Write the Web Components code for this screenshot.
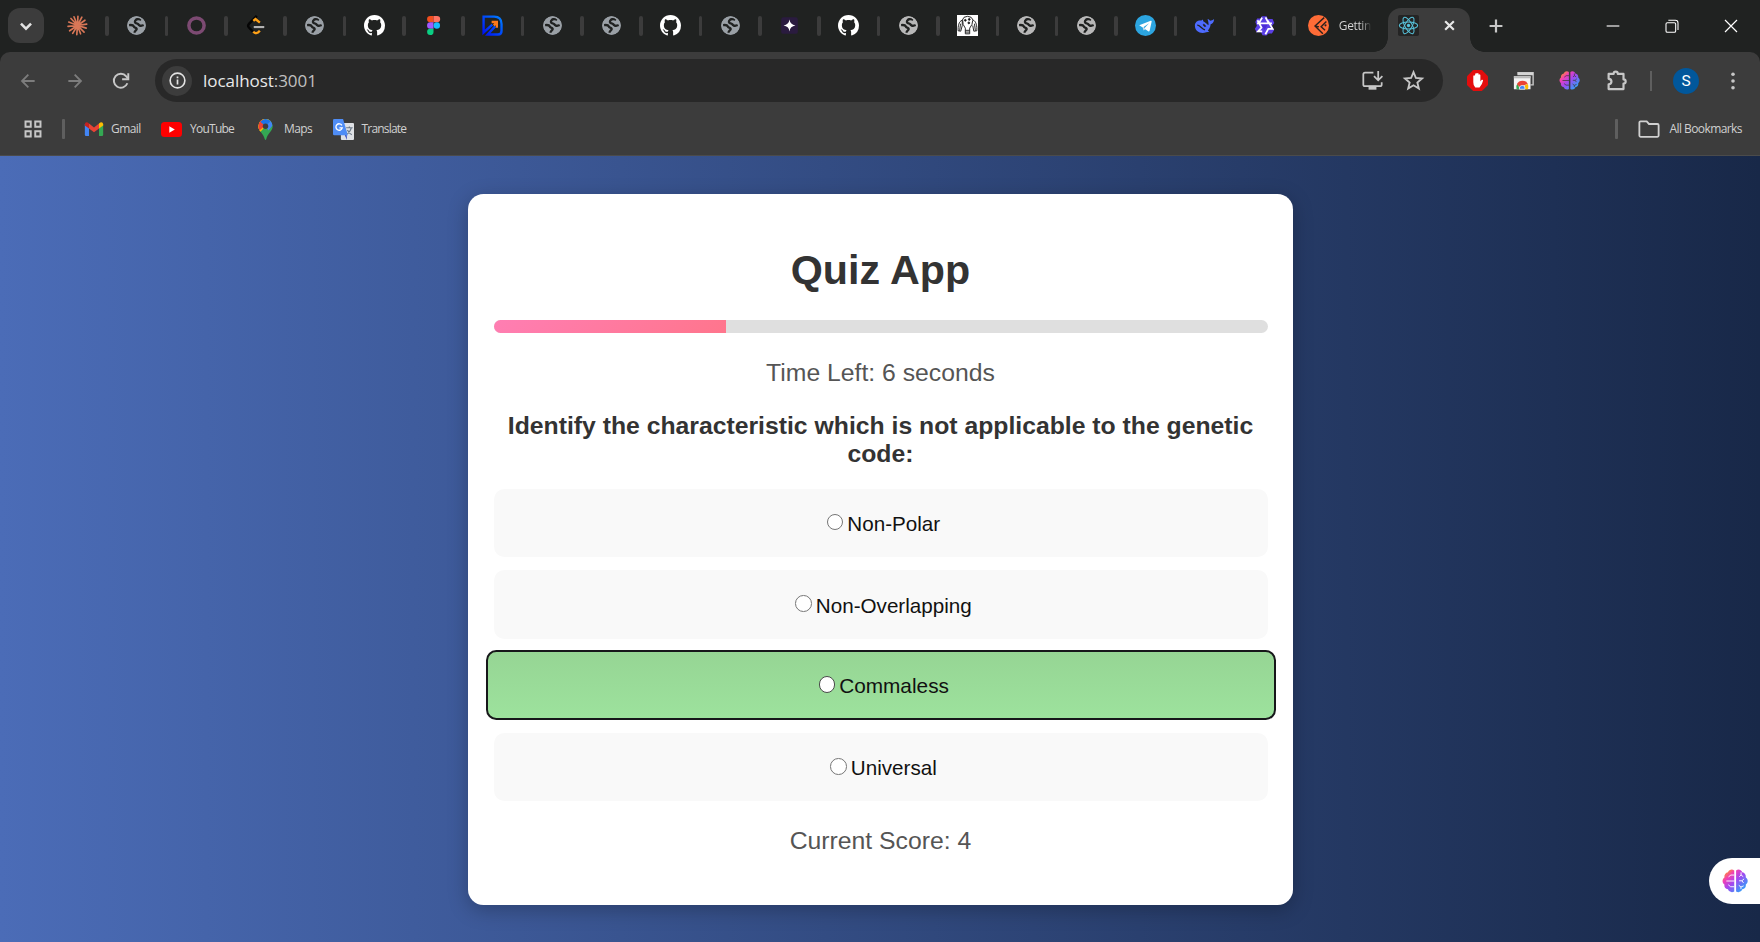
<!DOCTYPE html>
<html lang="en">
<head>
<meta charset="utf-8">
<title>Quiz App</title>
<style>
html,body{margin:0;height:100%;overflow:hidden;font-family:"Liberation Sans",Arial,sans-serif}
</style>
</head>
<body>
<browser-window></browser-window>
<script>
const globe = c => `<circle cx="12" cy="12" r="10.500" fill="${c}"/><path d="M17.500 5.200C14.600 4.200 11.500 4.800 10.500 6.600c-.9 1.900.4 3 2.400 3.200 1.300.2 1.300 1.400 2.400 2 1.600.8 3.700.3 4.900-.3M3.500 11.600c2.600-.4 4.900.2 5.500 1.600.5 1.400 3 1.200 3.200 2.800.2 1.500-2.600 1.700-2.500 4.400" fill="none" stroke="#202221" stroke-width="2.700"/><circle cx="12" cy="12" r="9.700" fill="none" stroke="${c}" stroke-width="1.800"/>`;
const brain = line => `<defs><linearGradient id="b" x1="0" y1="0" x2="1" y2="1"><stop offset=".08" stop-color="#ff9a1f"/><stop offset=".28" stop-color="#f23fb4"/><stop offset=".5" stop-color="#a447f0"/><stop offset=".78" stop-color="#4a8cf8"/><stop offset="1" stop-color="#22c0f5"/></linearGradient></defs>
<path fill="url(#b)" d="M11.300 2.200v19.500C9 23 6.300 22 5.500 19.700 3.200 19.500 1.800 17.400 2.200 15.200 0 13.500 0 10.300 2.200 8.700 1.900 6.200 3.400 4.300 5.500 4 6.500 1.400 9.300.8 11.300 2.200zM13 2.200v19.500c2.400 1.300 4.900.3 5.700-2 2.300-.2 3.700-2.300 3.300-4.500 2.300-1.700 2.300-4.900 0-6.500.3-2.500-1.100-4.400-3.300-4.700-1-2.600-3.700-3.200-5.700-1.800z"/>
<g fill="none" stroke="${line}" stroke-width=".85"><path d="M11.400 6.500H8.200L6 8.200M11.400 12H4M11.400 17.300H8L5.800 15.500M16 8l1.600-1.500V4M17.600 6.500l2 1.500M15.800 11.800h2.600l2-1.800M18.400 11.800l1.500 2M15.500 16l2 1.500 2.500-1M17.500 17.500v2"/></g>`;
const ICONS = {
 chevron:`<path d="M6.500 9.500l5.500 5.500 5.500-5.500" fill="none" stroke="#e3e3e3" stroke-width="2.800"/>`,
 claude:`<g stroke="#d97757" stroke-width="1.900" stroke-linecap="round"><path d="M12 12L12.500 1.500M12 12L17 2.500M12 12l8.500-6M12 12l10.500-1.500M12 12l10 3M12 12l7.500 7.500M12 12l3.500 9.500M12 12l-.8 10.500M12 12l-5.500 9M12 12l-9 6M12 12L1.200 13M12 12L2 8M12 12L4.500 4M12 12L8 2"/></g>`,
 globe:globe('#9aa0a6'), globe2:globe('#b8b8b8'),
 ring:`<circle cx="12" cy="12" r="8.700" fill="none" stroke="#7c4a72" stroke-width="4"/>`,
 leet:`<path d="M13.500 1L4.500 10.200Q2.700 12.300 4.500 14.300L9 19" fill="none" stroke="#050505" stroke-width="2.800"/><path d="M9.500 6.800L12 4.700l5 4M9.500 19q3 4 7.500-1" fill="none" stroke="#ffa116" stroke-width="2.700"/><path d="M10 13.800h12" stroke="#b3b3b3" stroke-width="2.400"/>`,
 github:`<path transform="scale(1.5)" fill="#fff" d="M8 0C3.580 0 0 3.580 0 8c0 3.540 2.290 6.530 5.470 7.590.4.070.55-.17.55-.38 0-.19-.01-.82-.01-1.490-2.010.37-2.530-.49-2.690-.94-.09-.23-.48-.94-.82-1.130-.28-.15-.68-.52-.01-.53.63-.01 1.080.58 1.230.82.72 1.210 1.870.87 2.330.66.070-.52.28-.87.51-1.070-1.780-.2-3.640-.89-3.640-3.950 0-.87.31-1.590.82-2.150-.08-.2-.36-1.020.08-2.120 0 0 .67-.21 2.200.82.64-.18 1.320-.27 2-.27s1.360.09 2 .27c1.530-1.040 2.200-.82 2.200-.82.44 1.100.16 1.920.08 2.120.51.56.82 1.270.82 2.150 0 3.070-1.870 3.750-3.650 3.950.29.25.54.73.54 1.480 0 1.070-.01 1.930-.01 2.200 0 .21.15.46.55.38A8.010 8.010 0 0 0 16 8c0-4.420-3.580-8-8-8z"/>`,
 figma:`<path d="M12 1H8.300a3.600 3.600 0 0 0 0 7.300H12z" fill="#f24e1e"/><path d="M12 1h4a3.600 3.600 0 0 1 0 7.300h-4z" fill="#ff7262"/><path d="M12 8.300H8.300a3.600 3.600 0 0 0 0 7.300H12z" fill="#a259ff"/><circle cx="15.800" cy="12" r="3.650" fill="#1abcfe"/><path d="M12 15.600H8.300a3.650 3.650 0 1 0 3.700 3.700z" fill="#0acf83"/>`,
 dblue:`<defs><linearGradient id="d" x1="1" y1="0" x2="0" y2="1"><stop stop-color="#0080ff"/><stop offset="1" stop-color="#0010f5"/></linearGradient></defs><path d="M1.800 16V1.800h12q8.500 0 8.500 8.500v8q0 4-4 4H6.500L15 13M1.800 16v4l10-9" fill="none" stroke="url(#d)" stroke-width="2.700"/><path d="M11 8h6v6.500M16.500 8.500L13.500 12" fill="none" stroke="#ff7a1a" stroke-width="2.600"/>`,
 spark:`<rect x="2.500" y="2.500" width="19" height="19" rx="2.500" fill="#2a1b3f"/><path d="M12 5.200Q12.800 11.200 18.800 12 12.800 12.800 12 18.800 11.200 12.800 5.200 12 11.200 11.200 12 5.200z" fill="#fff"/>`,
 sketch:`<path fill="#fff" d="M0 0h24v24H0z"/><g fill="none" stroke="#222" stroke-width="1.100"><path d="M6 6Q7 1.500 12 1.500T18.500 6M6 6c-4 1-5 7-4.700 12l3 .5L6 12zM18.500 6c3.500 1 4.500 7 4.200 12l-3.500.5L18 12M6.500 6q-.5 5 3 9v6.500h5V15q3.500-4 3.500-9M9.500 17.500h5M9.500 19.500h5M3 18l1-8M21 18l-1-8"/><circle cx="9.500" cy="6" r="1" fill="#111"/><circle cx="14" cy="5" r="1" fill="#111"/><circle cx="13.500" cy="9" r="1" fill="#111"/></g>`,
 telegram:`<circle cx="12" cy="12" r="12" fill="#2ca5e0"/><path d="M4.800 11.800L18 6.600q1.300-.3 1 1.200l-2.200 10q-.4 1.500-1.700.7L8.800 14.200z" fill="#fff"/><path d="M8.800 14.200l1 3.500L12.200 16" fill="#c8daea"/><path d="M9.500 14L16 9.300l-5 5.500" fill="#2ca5e0"/>`,
 deepseek:`<path fill="#4d6bfe" d="M1 12.200C1 8 4 5.800 8.500 6.200l1.500-1 .8 2.200c2 .8 4.200 3 5.500 4.200.8-1 .1-1.900.1-3.600L15.500 4.500c1.500.3 2.300 1 2.900 2 1.700-.1 3-.6 4.600-1.800-.2 4-2 5.500-4 6-.3 3.100-1.400 5.200-3.200 7l1.700 1.400-3.500.5C7.700 22.300 1 18.500 1 12.200z"/><path d="M3.700 11.500c3-.2 4.700 4 8.800 5.600" fill="none" stroke="#202221" stroke-width="1.500"/><path d="M10.500 10.500c1.200-.4 2.700 1.300 3 2.500-1.500.7-3-.5-3-2.500z" fill="#202221" stroke="#202221" stroke-width=".6"/>`,
 qwen:`<path d="M9 1.500h5.500l1.300 3.200h5.400l2 4.500-2.700 3.300 2.500 4.500-2.500 4-3.800.2-2.600 2.300-4.400-.5-1.600-3.400H3l-2-4 2.300-3.300L1.500 8 3.600 4l3.700-.1z" fill="#5b3fe6"/><path d="M9.300 3L5.500 9.600h15M4 6l4.600 8.500-4 4.300h4.800M15.800 6.500l5.500 9.300-5.700.1M3.500 9.500h5M13 22l3.500-6.500M13.200 2.800l3 5.700" fill="none" stroke="#fff" stroke-width="2"/><path d="M8.500 11h7L12 17z" fill="#4b2bd6"/>`,
 postman:`<circle cx="12" cy="12" r="12" fill="#ff6c37"/><path d="M18.500 3L8 12.500l9 9M21 7.500l-6 6 4.500 4M8 12.500l4.500 1" fill="none" stroke="#2a211e" stroke-width="1.600"/><circle cx="20" cy="11.800" r="1.200" fill="#2a211e"/>`,
 react:`<rect width="24" height="24" rx="2" fill="#242424"/><g fill="none" stroke="#58c4dc" stroke-width="1.150"><ellipse cx="12" cy="12" rx="10.500" ry="4.100"/><ellipse cx="12" cy="12" rx="10.500" ry="4.100" transform="rotate(60 12 12)"/><ellipse cx="12" cy="12" rx="10.500" ry="4.100" transform="rotate(120 12 12)"/></g><circle cx="12" cy="12" r="1.900" fill="#58c4dc"/>`,
 close:`<path d="M4 4l16 16M20 4L4 20" stroke="#e8e8e8" stroke-width="4"/>`,
 plus:`<path d="M12 1v22M1 12h22" stroke="#c7c7c7" stroke-width="3.800"/>`,
 min:`<path d="M2.500 12h19" stroke="#fff" stroke-width="1.700"/>`,
 restore:`<path d="M3 9q0-2 2-2h10.500q2 0 2 2v10.500q0 2-2 2H5q-2 0-2-2zM6.500 3.500H17q4 0 4 4V18" fill="none" stroke="#fff" stroke-width="1.600"/>`,
 wclose:`<path d="M3 3l18 18M21 3L3 21" stroke="#fff" stroke-width="1.800"/>`,
 back:`<path d="M22 12H3M12.500 2.500L3 12l9.500 9.500" fill="none" stroke="#7d7d7d" stroke-width="2.700"/>`,
 fwd:`<path d="M2 12h19M11.500 2.500L21 12l-9.500 9.500" fill="none" stroke="#7d7d7d" stroke-width="2.700"/>`,
 reload:`<path d="M20.500 15A9.300 9.300 0 1 1 19 5.800l2 2.400" fill="none" stroke="#c7c7c7" stroke-width="2.600"/><path d="M21.700 1.500v8.200h-8.200" fill="none" stroke="#c7c7c7" stroke-width="2.600"/>`,
 info:`<circle cx="12" cy="12" r="10.400" fill="none" stroke="#e3e3e3" stroke-width="2.300"/><path d="M12 10.500v7M12 6.200v2.500" stroke="#e3e3e3" stroke-width="2.400"/>`,
 install:`<path d="M13 3H3.500Q1.500 3 1.500 5v11.500q0 2 2 2h17q2 0 2-2V14M18.500 1v10.500M13.700 7l4.800 4.800L23.300 7" fill="none" stroke="#c7c7c7" stroke-width="2"/><path d="M7.500 18h9v4.500h-9z" fill="#c7c7c7"/>`,
 star:`<path d="M12 2.500l2.700 6.600 7.100.6-5.400 4.600 1.700 7L12 17.500l-6.100 3.800 1.700-7-5.400-4.600 7.100-.6z" fill="none" stroke="#c7c7c7" stroke-width="2.100"/>`,
 adblock:`<path d="M7 0h10l7 7v10l-7 7H7l-7-7V7z" fill="#e40d0d"/><path fill="#fff" d="M7.200 6.500q1.200-1.300 1.800.2l.5-2.500q1.200-1.600 1.800.2 1.100-1.900 2 0v1q1.200-1.300 2 .3V13l1.500-1.800q1.800-.4 1.500 1.200-.9 4.600-4 7.600H9.500Q7 17.500 7.200 14z"/>`,
 store:`<path d="M5 3h18v14h-3" fill="none" stroke="#c7c7c7" stroke-width="1.600"/><path d="M5 3h18v3H5z" fill="#d5d5d5"/><path d="M1 7h19v15H1z" fill="#f4f4f4"/><path d="M1 7h19v2.500H1z" fill="#bbb"/><path d="M4 22a7.200 7.200 0 0 1 1-6.500L8 22z" fill="#34a853"/><path d="M4.500 16a7 7 0 0 1 12.500 0l-6 2-4 1z" fill="#ea4335"/><path d="M17 16q1 3 0 6h-5l2-5z" fill="#fbbc04"/><path d="M7.500 22a3.200 3.200 0 1 1 6 0z" fill="#4285f4" stroke="#fff" stroke-width=".8"/>`,
 brain:brain('#3c3c3c'), brainw:brain('#fff'),
 ext:`<path d="M3 4.500h5.700C8.700 1 13.500 1 13.500 4.500H20v6.300c3.300 0 3.300 4.700 0 4.700v6.300H3v-5.500c4.300-.3 4.300-6 0-6.200z" fill="none" stroke="#c7c7c7" stroke-width="2.500" stroke-linejoin="round"/>`,
 dots:`<g fill="#c7c7c7"><circle cx="12" cy="3" r="2.400"/><circle cx="12" cy="12" r="2.400"/><circle cx="12" cy="21" r="2.400"/></g>`,
 apps:`<path d="M2 2h7v7H2zM15 2h7v7h-7zM2 15h7v7H2zM15 15h7v7h-7z" fill="none" stroke="#c7c7c7" stroke-width="2.600"/>`,
 gmail:`<path d="M1 6v13q0 1.500 1.500 1.500H6V10z" fill="#4285f4"/><path d="M23 6v13q0 1.500-1.500 1.500H18V10z" fill="#34a853"/><path d="M6 5.500l6 4.700 6-4.700v6L12 16l-6-4.500z" fill="#ea4335"/><path d="M6 5.500v6L1 7.800V6q.7-3 3.500-1.700z" fill="#c5221f"/><path d="M18 5.500v6l5-3.700V6q-.7-3-3.500-1.700z" fill="#fbbc04"/>`,
 youtube:`<rect x="0" y="3.500" width="24" height="17" rx="4" fill="#f00"/><path d="M9.500 8.300v7.400l6.300-3.700z" fill="#fff"/>`,
 maps:`<defs><clipPath id="m"><path d="M12 0a8.200 8.200 0 0 1 8.200 8.200c0 6-5.800 7.500-7.300 14.600q-.9 2.200-1.800 0C9.600 15.700 3.800 14.200 3.800 8.200A8.200 8.200 0 0 1 12 0z"/></clipPath></defs><g clip-path="url(#m)"><path fill="#34a853" d="M0 0h24v24H0z"/><path d="M2 18L18-1H0z" fill="#fbbc04"/><path d="M4 17l9-10 3-3L24 0H8L2 10z" fill="#fbbc04"/><path d="M0 0h9l3 7-8 7z" fill="#ea4335"/><path d="M6 3l6 5 7-6-6-4z" fill="#1a73e8"/><path d="M12 8l6.500-6 1.800 5-5 6z" fill="#4285f4"/></g><circle cx="12" cy="8.200" r="3.100" fill="#3c3c3c"/>`,
 translate:`<rect x="9" y="4.500" width="15" height="19.500" rx="1.200" fill="#dfe1e5"/><path d="M13.500 18.500l2.500 5.500-.5-6z" fill="#2a3fc0"/><path d="M1.500 0h10l5.500 18.500H1.500Q0 18.500 0 17V1.500Q0 0 1.500 0z" fill="#4f8df6"/><path d="M10.200 7.200a3.700 3.700 0 1 0 .4 3H7.300" fill="none" stroke="#fff" stroke-width="1.500"/><path d="M15 10h7.500M18.700 8.500V10M21 10q-1 4-4.500 7M16.500 12.500q2 4 5 5.500" fill="none" stroke="#6c7a89" stroke-width="1.400"/>`,
 folder:`<path d="M1.500 5q0-1.300 1.300-1.300h6.700l2.500 2.800h9.200q1.300 0 1.300 1.300v11.400q0 1.300-1.300 1.300H2.800q-1.300 0-1.300-1.300z" fill="none" stroke="#d0d0d0" stroke-width="2"/>`
};
const define = (tag, render) => customElements.define(tag, class extends HTMLElement {
  connectedCallback() {
    if (this.shadowRoot) return;
    const t = document.createElement('template');
    t.innerHTML = render(this);
    this.attachShadow({mode:'open'}).append(t.content.cloneNode(true));
  }
});

define('ui-icon', el => { const s = el.getAttribute('size') || 21; return `
<style>:host{display:block;flex:none;width:${s}px;height:${s}px}svg{display:block;width:100%;height:100%;overflow:visible}</style>
<svg viewBox="0 0 24 24">${ICONS[el.getAttribute('name')]}</svg>`; });

define('small-tab', el => `
<style>:host{display:flex;flex:none;align-items:center;width:59.35px;height:51px}
div{flex:1;display:flex;justify-content:center}i{width:3.500px;height:20px;border-radius:2px;background:#3c3c3c;margin-top:1px}</style>
<div><ui-icon name="${el.getAttribute('icon')}" size="21"></ui-icon></div><i></i>`);

define('tab-strip', () => `
<style>
:host{display:flex;height:52px;background:#202221;padding-left:8px;align-items:flex-start}
.menu{width:36px;height:35px;margin:8px 5.500px 0 0;border-radius:12px;background:#3c3c3c;display:flex;align-items:center;justify-content:center}
.post{width:92.150px;height:51px;box-sizing:border-box;padding-left:12.150px;display:flex;align-items:center;gap:10px}
.post span{font:12px "Open Sans",sans-serif;color:#d0d0d0;white-space:nowrap;letter-spacing:-.4px;background:linear-gradient(90deg,#d8d8d8 65%,#2c2e2d);-webkit-background-clip:text;-webkit-text-fill-color:transparent}
.active{position:relative;width:82px;height:44px;margin-top:8px;box-sizing:border-box;background:#3c3c3c;border-radius:13px 13px 0 0;display:flex;padding:0 14px 9px 10px;align-items:center;justify-content:space-between}
.active:before,.active:after{content:"";position:absolute;bottom:0;width:14px;height:14px}
.active:before{left:-14px;background:radial-gradient(circle at 0 0,transparent 13.500px,#3c3c3c 14px)}
.active:after{right:-14px;background:radial-gradient(circle at 100% 0,transparent 13.500px,#3c3c3c 14px)}
.plus{margin:18.500px 0 0 19.500px}
.ctl{margin-left:auto;display:flex;gap:43px;padding:18px 21px 0 0}
</style>
<div class="menu"><ui-icon name="chevron" size="22"></ui-icon></div>
${'claude globe ring leet globe github figma dblue globe globe github globe spark github globe2 sketch globe2 globe2 telegram deepseek qwen'.split(' ').map(i=>`<small-tab icon="${i}"></small-tab>`).join('')}
<div class="post"><ui-icon name="postman" size="21"></ui-icon><span>Gettin</span></div>
<div class="active"><ui-icon name="react" size="21"></ui-icon><ui-icon name="close" size="13"></ui-icon></div>
<ui-icon class="plus" name="plus" size="14"></ui-icon>
<div class="ctl"><ui-icon name="min" size="16"></ui-icon><ui-icon name="restore" size="16"></ui-icon><ui-icon name="wclose" size="16"></ui-icon></div>`);

define('nav-bar', () => `
<style>
:host{display:flex;align-items:center;height:57px;box-sizing:border-box;padding:0 18px 0 20px;background:#3c3c3c;border-radius:10px 10px 0 0}
.b{margin-right:31px}
.omni{width:1288px;height:43px;margin-left:6px;border-radius:22px;background:#282828;display:flex;align-items:center;box-sizing:border-box;padding:0 19.500px 0 7px}
.info{width:30px;height:30px;border-radius:50%;background:#3c3c3c;display:flex;align-items:center;justify-content:center}
.url{margin-left:11px;font:17px/24px "Open Sans",sans-serif;letter-spacing:-.05px;color:#e8e8e8}.url span{color:#c0c0c0}
.r{margin-left:auto;display:flex;gap:20px;align-items:center}
.ex{display:flex;align-items:center;margin-left:24px;gap:25.200px}
.sep{width:2px;height:20px;background:#5f5f5f;margin:0 21px 0 23.500px}
.av{width:26px;height:26px;border-radius:50%;background:#01579b;color:#fff;font:15.500px/26px Roboto,sans-serif;text-align:center}
.dots{margin-left:auto}
</style>
<ui-icon class="b" name="back" size="16"></ui-icon><ui-icon class="b" name="fwd" size="16"></ui-icon><ui-icon name="reload" size="18" style="margin-right:19px;margin-left:-2px"></ui-icon>
<div class="omni"><div class="info"><ui-icon name="info" size="17"></ui-icon></div><div class="url">localhost<span>:3001</span></div>
<div class="r"><ui-icon name="install" size="21"></ui-icon><ui-icon name="star" size="21"></ui-icon></div></div>
<div class="ex"><ui-icon name="adblock"></ui-icon><ui-icon name="store"></ui-icon><ui-icon name="brain"></ui-icon><ui-icon name="ext"></ui-icon></div>
<div class="sep"></div><div class="av">S</div><ui-icon class="dots" name="dots" size="18"></ui-icon>`);

define('bookmark-item', () => `
<style>:host{display:flex;align-items:center;font:12px/18px "Open Sans",sans-serif;color:#d0d0d0;white-space:nowrap}</style><slot name="icon"></slot><slot></slot>`);

define('bookmark-bar', () => `
<style>
:host{display:flex;align-items:center;height:47px;box-sizing:border-box;padding:0 18px 6px 24px;background:#3c3c3c;border-bottom:1px solid #4b4b4b}
i{width:3px;height:20px;border-radius:1px;background:#5f5f5f}
</style>
<ui-icon name="apps" size="18"></ui-icon><i style="margin:0 19px 0 20px"></i>
<bookmark-item style="width:77px;letter-spacing:-.55px"><ui-icon slot="icon" name="gmail" size="20" style="margin-right:7px"></ui-icon>Gmail</bookmark-item>
<bookmark-item style="width:97px;letter-spacing:-.75px"><ui-icon slot="icon" name="youtube" style="margin-right:8px"></ui-icon>YouTube</bookmark-item>
<bookmark-item style="width:77px;letter-spacing:-.6px;margin-left:-3px"><ui-icon slot="icon" name="maps" style="margin-right:8px"></ui-icon>Maps</bookmark-item>
<bookmark-item style="letter-spacing:-.8px;margin-left:1px"><ui-icon slot="icon" name="translate" style="margin-right:7.500px"></ui-icon>Translate</bookmark-item>
<i style="margin-left:auto;margin-right:20px"></i>
<bookmark-item style="letter-spacing:-.58px"><ui-icon slot="icon" name="folder" size="22" style="margin-right:10px"></ui-icon>All Bookmarks</bookmark-item>`);

define('progress-bar', () => `
<style>:host{display:block;height:13px;border-radius:6.500px;background:#dfdfdf;overflow:hidden}div{height:100%;width:30%;background:linear-gradient(135deg,#ff7eb3,#ff758c)}</style><div></div>`);

define('quiz-option', () => `
<style>
:host{display:flex;align-items:center;justify-content:center;height:68.300px;box-sizing:border-box;border-radius:10.300px;background:#f9f9f9;font-size:20.640px;line-height:24px;color:#111;margin-bottom:13px;padding-top:2px}
:host([selected]){height:69.500px;margin:-1.200px -8px 13.200px -7.500px;border:2px solid #17171a;background:linear-gradient(#96d594,#9de29d);font-size:20.800px}
:host([low]) span{padding-top:2px}
input{appearance:none;flex:none;box-sizing:border-box;width:16.700px;height:16.700px;margin:-4px 3.900px 0 6px;border:1.200px solid #767676;border-radius:50%;background:#fff}
:host([selected]) input{border-color:#4a4a4a}
</style><input type="radio"><span><slot></slot></span>`);

define('quiz-card', () => `
<style>
:host{display:block;box-sizing:border-box;width:825px;height:711px;padding:26px 25.500px 0;border-radius:15.500px;background:#fff;box-shadow:0 5px 20px rgba(0,0,0,.25);text-align:center;color:#333}
h1{margin:27px 0 26px;font-size:41.250px;line-height:47px}
p{margin:25.500px 0 25px;font-size:24.750px;line-height:28px;color:#555}
h2{margin:0 0 21.500px;font-size:24.750px;line-height:28px}
.score{margin:26px 0 0}
</style>
<h1>Quiz App</h1><progress-bar></progress-bar><p>Time Left: 6 seconds</p>
<h2>Identify the characteristic which is not applicable to the genetic code:</h2>
<quiz-option>Non-Polar</quiz-option><quiz-option low>Non-Overlapping</quiz-option><quiz-option selected>Commaless</quiz-option><quiz-option>Universal</quiz-option>
<p class="score">Current Score: 4</p>`);

define('assistant-tab', () => `
<style>:host{position:absolute;right:0;top:702px;width:51px;height:46px;border-radius:23px 0 0 23px;background:#fff;display:flex;align-items:center;padding-left:13px;box-sizing:border-box}</style><ui-icon name="brainw" size="26"></ui-icon>`);

define('browser-window', () => `
<style>
:host{display:flex;flex-direction:column;height:942px;width:1760px;background:#202221}
main{position:relative;flex:1;display:flex;justify-content:center;align-items:flex-start;padding:38px 0 0 1px;box-sizing:border-box;background:linear-gradient(90deg,#4b6cb7,#182848);overflow:hidden}
</style>
<tab-strip></tab-strip><nav-bar></nav-bar><bookmark-bar></bookmark-bar>
<main><quiz-card></quiz-card><assistant-tab></assistant-tab></main>`);
</script>
</body>
</html>
